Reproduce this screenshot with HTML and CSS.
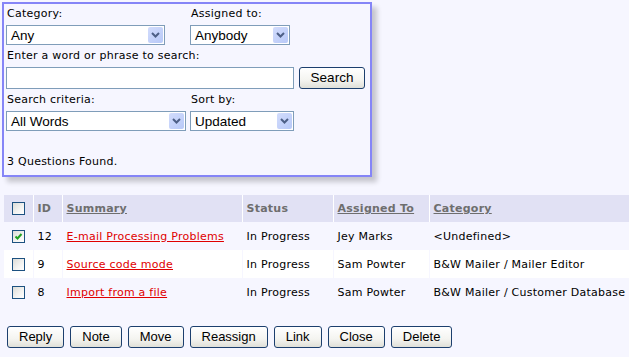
FILE: index.html
```html
<!DOCTYPE html>
<html>
<head>
<meta charset="utf-8">
<link rel="stylesheet" href="styles.css">
</head>
<body>
<form class="panel">
  <div class="pair">
    <div class="col col-a">
      <div class="lbl">Category:</div>
      <div class="sel w159"><span class="val">Any</span><span class="arr"><svg width="9" height="6" viewBox="0 0 9 6"><path d="M1 1 L4.5 4.5 L8 1" fill="none" stroke="#4d5f86" stroke-width="2"/></svg></span></div>
    </div>
    <div class="col">
      <div class="lbl">Assigned to:</div>
      <div class="sel w100"><span class="val">Anybody</span><span class="arr"><svg width="9" height="6" viewBox="0 0 9 6"><path d="M1 1 L4.5 4.5 L8 1" fill="none" stroke="#4d5f86" stroke-width="2"/></svg></span></div>
    </div>
  </div>
  <div class="lbl lbl-gap">Enter a word or phrase to search:</div>
  <div class="search-row">
    <input class="txt" type="text">
    <button type="button" class="btn btn-search">Search</button>
  </div>
  <div class="pair">
    <div class="col col-a">
      <div class="lbl lbl-gap">Search criteria:</div>
      <div class="sel w180"><span class="val">All Words</span><span class="arr"><svg width="9" height="6" viewBox="0 0 9 6"><path d="M1 1 L4.5 4.5 L8 1" fill="none" stroke="#4d5f86" stroke-width="2"/></svg></span></div>
    </div>
    <div class="col">
      <div class="lbl lbl-gap">Sort by:</div>
      <div class="sel w104"><span class="val">Updated</span><span class="arr"><svg width="9" height="6" viewBox="0 0 9 6"><path d="M1 1 L4.5 4.5 L8 1" fill="none" stroke="#4d5f86" stroke-width="2"/></svg></span></div>
    </div>
  </div>
  <div class="found">3 Questions Found.</div>
</form>

<table class="grid">
  <colgroup>
    <col class="c-cb"><col class="c-id"><col class="c-sum"><col class="c-st"><col class="c-as"><col>
  </colgroup>
  <thead>
    <tr>
      <th><span class="cb"></span></th>
      <th>ID</th>
      <th><a href="#">Summary</a></th>
      <th>Status</th>
      <th><a href="#">Assigned To</a></th>
      <th><a href="#">Category</a></th>
    </tr>
  </thead>
  <tbody>
    <tr>
      <td><span class="cb"><svg width="11" height="11" viewBox="0 0 11 11"><path d="M2.5 5.5 L4.5 7.5 L8.5 3" fill="none" stroke="#21a121" stroke-width="2"/></svg></span></td>
      <td>12</td>
      <td><a class="lnk" href="#">E-mail Processing Problems</a></td>
      <td>In Progress</td>
      <td>Jey Marks</td>
      <td>&lt;Undefined&gt;</td>
    </tr>
    <tr class="alt">
      <td><span class="cb"></span></td>
      <td>9</td>
      <td><a class="lnk" href="#">Source code mode</a></td>
      <td>In Progress</td>
      <td>Sam Powter</td>
      <td>B&amp;W Mailer / Mailer Editor</td>
    </tr>
    <tr>
      <td><span class="cb"></span></td>
      <td>8</td>
      <td><a class="lnk" href="#">Import from a file</a></td>
      <td>In Progress</td>
      <td>Sam Powter</td>
      <td>B&amp;W Mailer / Customer Database</td>
    </tr>
  </tbody>
</table>

<div class="actions">
  <button type="button" class="btn">Reply</button>
  <button type="button" class="btn">Note</button>
  <button type="button" class="btn">Move</button>
  <button type="button" class="btn">Reassign</button>
  <button type="button" class="btn">Link</button>
  <button type="button" class="btn">Close</button>
  <button type="button" class="btn">Delete</button>
</div>
</body>
</html>
```
FILE: styles.css
```css
html, body {
  margin: 0;
  padding: 0;
  background: #f6f6ff;
}
body {
  font-family: "DejaVu Sans", Verdana, sans-serif;
  font-size: 11px;
  letter-spacing: 0.25px;
  color: #000;
}
.panel {
  margin: 2px 0 0 2px;
  width: 370px;
  height: 175px;
  box-sizing: border-box;
  border: 2px solid #8585f7;
  box-shadow: 5px 5px 5px rgba(0, 0, 0, 0.2);
  padding: 3px 0 0 2px;
}
.pair {
  display: flex;
}
.col-a {
  width: 184px;
}
.lbl {
  line-height: 14px;
  height: 14px;
  padding-left: 1px;
}
.lbl-gap {
  margin-top: 4px;
}
.sel {
  margin-top: 4px;
  height: 20px;
  box-sizing: border-box;
  border: 1px solid #7f9db9;
  background: #fff;
  display: flex;
  align-items: center;
  font-family: "Liberation Sans", Arial, sans-serif;
  font-size: 13.5px;
  letter-spacing: 0;
}
.w159 { width: 159px; }
.w100 { width: 100px; }
.w180 { width: 180px; }
.w104 { width: 104px; }
.val {
  flex: 1;
  padding-left: 4px;
  white-space: nowrap;
}
.arr {
  width: 15px;
  height: 16px;
  margin-right: 1px;
  border-radius: 2px;
  background: linear-gradient(135deg, #d2dcfc 0%, #b8c9f8 100%);
  display: flex;
  align-items: center;
  justify-content: center;
}
.search-row {
  margin-top: 4px;
  display: flex;
  align-items: center;
  gap: 5px;
}
.txt {
  margin: 0;
  width: 288px;
  height: 22px;
  box-sizing: border-box;
  border: 1px solid #7f9db9;
  background: #fff;
  padding: 0 3px;
}
.btn {
  margin: 0;
  height: 22px;
  box-sizing: border-box;
  border: 1px solid #1c3f6e;
  border-radius: 3px;
  background: linear-gradient(#ffffff 0%, #f4f4f0 60%, #e0e0d8 100%);
  font-family: "Liberation Sans", Arial, sans-serif;
  font-size: 13px;
  letter-spacing: 0;
  color: #000;
  padding: 0 11px;
  line-height: 20px;
}
.btn-search {
  width: 66px;
  padding: 0;
  font-size: 13.5px;
}
.found {
  margin-top: 24px;
  line-height: 14px;
  padding-left: 1px;
}
.grid {
  margin: 18px 0 0 4px;
  width: 625px;
  table-layout: fixed;
  border-collapse: collapse;
}
.c-cb { width: 29px; }
.c-id { width: 29px; }
.c-sum { width: 180px; }
.c-st { width: 91px; }
.c-as { width: 96px; }
.grid th, .grid td {
  padding: 0 0 0 4px;
  text-align: left;
  white-space: nowrap;
  border-right: 1px solid transparent;
}
.grid th {
  height: 27px;
  background: #e1e1f4;
  color: #6e6e6e;
  font-weight: bold;
  border-right-color: #fff;
}
.grid th a {
  color: #6e6e6e;
}
.grid td {
  height: 28px;
}
.grid tr.alt td {
  background: #fff;
  border-right-color: #f6f6ff;
}
.grid th:last-child, .grid td:last-child {
  border-right: 0;
}
.grid th:first-child, .grid td:first-child {
  padding-left: 8px;
}
.cb {
  display: flex;
  align-items: center;
  justify-content: center;
  width: 13px;
  height: 13px;
  box-sizing: border-box;
  border: 1px solid #1c5180;
  background: linear-gradient(135deg, #dcdcd7 0%, #f4f4f2 60%, #ffffff 100%);
}
.lnk {
  color: #e00000;
}
.actions {
  margin: 20px 0 0 7px;
  display: flex;
  gap: 6px;
}
```
